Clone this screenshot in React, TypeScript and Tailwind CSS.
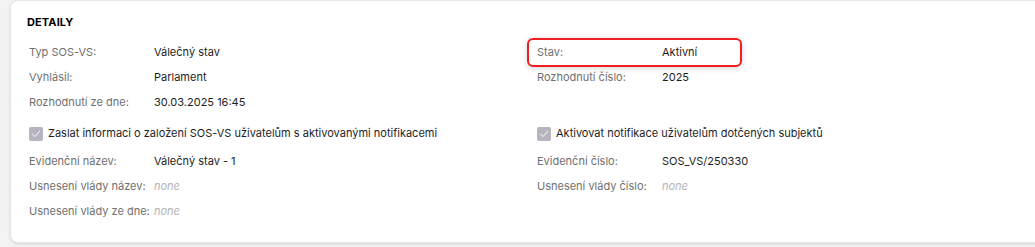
import React from "react"

const Row = ({ label, value, none }: { label: string; value?: string; none?: boolean }) => (
  <div className="flex items-center h-[25px]">
    <span className="w-[125px] shrink-0 whitespace-nowrap text-[#707070]">{label}</span>
    {none ? (
      <span className="italic text-[#b4b4b4]">none</span>
    ) : (
      <span className="text-[#1e1e1e]">{value}</span>
    )}
  </div>
)

const Check = ({ label }: { label: string }) => (
  <div className="flex items-center h-[31px] gap-[5px]">
    <span className="w-[14px] h-[14px] rounded-[2px] bg-[#b7b3bf] flex items-center justify-center">
      <svg width="10" height="10" viewBox="0 0 10 10" fill="none">
        <path d="M1.5 5.2 L4 7.6 L8.6 2.4" stroke="white" strokeWidth="1" strokeLinecap="round" strokeLinejoin="round" />
      </svg>
    </span>
    <span className="text-[#1e1e1e]">{label}</span>
  </div>
)

export default function App() {
  return (
    <div className="w-[1035px] h-[247px] overflow-hidden bg-[#f3f3f3] pl-[10px]" style={{ fontFamily: "Inter, 'Liberation Sans', sans-serif" }}>
      <div className="w-[1060px] h-[243px] bg-white rounded-lg border border-[#e3e8ee] shadow-[0_1px_3px_rgba(0,0,0,0.12)] pl-[18px] pt-[13px] text-[11px]">
        <h2 className="text-[11px] font-bold text-black tracking-[0.01em] h-[17px] leading-[17px] ml-[-2px]">DETAILY</h2>
        <div className="grid grid-cols-[508px_508px] mt-[9px]">
          <div>
            <Row label="Typ SOS-VS:" value="Válečný stav" />
            <Row label="Vyhlásil:" value="Parlament" />
            <Row label="Rozhodnutí ze dne:" value="30.03.2025 16:45" />
          </div>
          <div>
            <div className="relative">
              <div className="absolute left-[-10px] top-[-2px] w-[215px] h-[29px] rounded-[6px] border-2 border-[#f01e1e] shadow-[0_1px_6px_rgba(0,0,0,0.18)]" />
              <Row label="Stav:" value="Aktivní" />
            </div>
            <Row label="Rozhodnutí číslo:" value="2025" />
          </div>
          <div className="mt-[3px]">
            <Check label="Zaslat informaci o založení SOS-VS uživatelům s aktivovanými notifikacemi" />
            <Row label="Evidenční název:" value="Válečný stav - 1" />
            <Row label="Usnesení vlády název:" none />
            <Row label="Usnesení vlády ze dne:" none />
          </div>
          <div className="mt-[3px]">
            <Check label="Aktivovat notifikace uživatelům dotčených subjektů" />
            <Row label="Evidenční číslo:" value="SOS_VS/250330" />
            <Row label="Usnesení vlády číslo:" none />
          </div>
        </div>
      </div>
    </div>
  )
}
